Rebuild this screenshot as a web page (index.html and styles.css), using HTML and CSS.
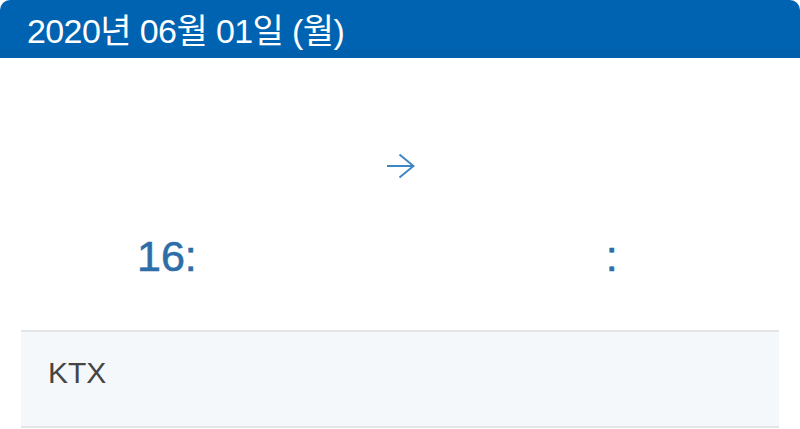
FILE: index.html
```html
<!DOCTYPE html>
<html lang="ko">
<head>
<meta charset="utf-8">
<link rel="stylesheet" href="styles.css">
</head>
<body>
<div class="card">
  <div class="header"><span class="date">2020년 06월 01일 (월)</span></div>
  <div class="route">
    <svg class="arrow" width="28" height="26" viewBox="0 0 28 26"><path d="M0 13 H26.5 M12.5 1.5 L26.5 13 L12.5 24.5" fill="none" stroke="#3e85c5" stroke-width="2"/></svg>
  </div>
  <div class="times">
    <div class="time dep">16:</div>
    <div class="time arr">:</div>
  </div>
  <div class="train">KTX</div>
</div>
</body>
</html>
```
FILE: styles.css
```css
html, body { margin: 0; padding: 0; background: #fff; }
body { font-family: "Liberation Sans", "Noto Sans CJK KR", sans-serif; width: 800px; height: 429px; overflow: hidden; }
.card { display: flex; flex-direction: column; }
.header { height: 58px; background: #0063b2; border-radius: 10px 10px 0 0; display: flex; align-items: center; padding-left: 27px; box-shadow: inset 0 -9px 0 #005fac; }
.date { color: #fff; font-family: "Liberation Sans", "Noto Sans CJK KR", sans-serif; font-size: 34px; line-height: 1; letter-spacing: -0.6px; margin-top: 3px; }
.route { display: flex; justify-content: center; padding-top: 95px; }
.arrow { display: block; margin-left: 1px; }
.times { display: flex; margin-top: 55px; }
.time { color: #2d6ea8; font-size: 43px; line-height: 44px; height: 44px; -webkit-text-stroke: 0.6px #2d6ea8; }
.dep { margin-left: 137px; }
.arr { margin-left: 409px; }
.train { margin: 52px 21px 0; height: 98px; box-sizing: border-box; background: #f5f8fb; border-top: 2px solid #e2e4e6; border-bottom: 2px solid #e2e4e6; padding: 24px 0 0 27px; color: #454545; font-size: 30px; line-height: 34px; }
```
